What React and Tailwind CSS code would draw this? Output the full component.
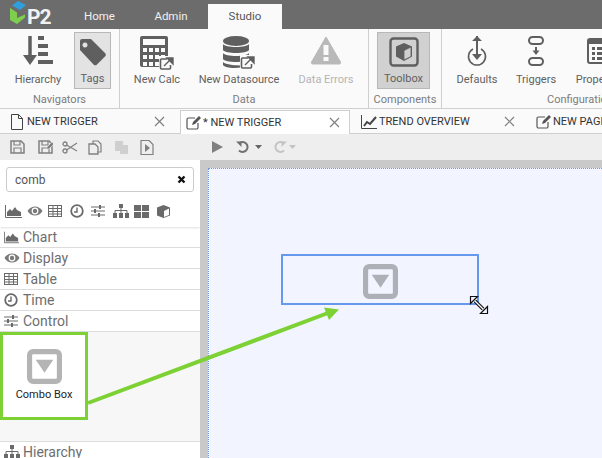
import React from "react";

const Ic = ({ w = 16, h = 16, vb, children, className = "" }) => (
  <svg width={w} height={h} viewBox={vb || `0 0 ${w} ${h}`} className={"shrink-0 " + className}>{children}</svg>
);

const G = "#5f5f5f";

const Ext = ({ x, y }) => (
  <g transform={`translate(${x} ${y})`}>
    <rect x="0" y="0" width="15" height="15" fill="#fafafa" />
    <path d="M8 3H2.500A1 1 0 0 0 1.500 4v8a1 1 0 0 0 1 1h8a1 1 0 0 0 1-1V9" fill="none" stroke={G} strokeWidth="1.600" />
    <path d="M5 10 12 3M8 2h6v6z" fill={G} stroke={G} strokeWidth="1.400" />
  </g>
);

const HierarchyIcon = () => (
  <Ic w={32} h={32}>
    <path d="M8 1v24" stroke={G} strokeWidth="3.500" />
    <path d="M1 20h14l-7 10z" fill={G} />
    <rect x="16" y="1" width="6" height="4" fill={G} /><rect x="16" y="9" width="10" height="4" fill={G} />
    <rect x="16" y="17" width="10" height="4" fill={G} /><rect x="16" y="25" width="15" height="4" fill={G} />
  </Ic>
);
const TagIcon = () => (
  <Ic w={28} h={28} className="mt-[2px]">
    <path fillRule="evenodd" d="M1 3a2 2 0 0 1 2-2h9l14 14a2.500 2.500 0 0 1 0 3.500l-8 8a2.500 2.500 0 0 1-3.500 0L1 12zM6 4.500a2.500 2.500 0 1 0 .01 0z" fill={G} />
  </Ic>
);
const CalcIcon = () => (
  <Ic w={36} h={36} className="mt-[1px]">
    <rect x="1" y="0" width="28" height="31" rx="2" fill={G} />
    <rect x="4" y="3" width="22" height="6" fill="#fafafa" />
    {[4, 11, 18].map((y) => [4, 10, 16, 22].map((x) => <rect key={x + "-" + y} x={x} y={y + 8} width="4" height="4" fill="#fafafa" />))}
    <Ext x={20} y={20} />
  </Ic>
);
const DbIcon = () => (
  <Ic w={34} h={36} className="mt-[1px]">
    <ellipse cx="14" cy="5" rx="13" ry="5" fill={G} />
    <path d="M1 8c2 4 24 4 26 0v6c-2 4-24 4-26 0zM1 17c2 4 24 4 26 0v6c-2 4-24 4-26 0zM1 26c2 3 18 4 20 3v2c-8 2-18 1-20-2z" fill={G} />
    <Ext x={18} y={19} />
  </Ic>
);
const WarnIcon = () => (
  <Ic w={32} h={30}>
    <path d="M16 2 30.500 27a1.500 1.500 0 0 1-1 2h-27a1.500 1.500 0 0 1-1-2z" fill="#b9b9b9" stroke="#b9b9b9" strokeWidth="1" strokeLinejoin="round" />
    <rect x="13.500" y="10" width="5" height="10" fill="#fafafa" /><rect x="13.500" y="22" width="5" height="4" fill="#fafafa" />
  </Ic>
);
const ToolboxIcon = () => (
  <Ic w={30} h={30} className="mt-[1px]">
    <rect x="1.500" y="1.500" width="27" height="27" rx="3" fill="none" stroke={G} strokeWidth="2.400" />
    <path d="M15 6 23 9.500v10L15 24l-8-4.500v-10z" fill={G} />
    <path d="M15 13.500 22 10v9.500L15 23z" fill="#d0d0d0" stroke={G} strokeWidth=".8" />
  </Ic>
);
const DefaultsIcon = () => (
  <Ic w={20} h={32}>
    <path d="M10 1v21" stroke={G} strokeWidth="2" /><path d="M5 6l5-5 5 5zM5 19h10l-5 6z" fill={G} />
    <path d="M6 14a8.500 8.500 0 1 0 8 0" fill="none" stroke={G} strokeWidth="1.600" />
  </Ic>
);
const TriggersIcon = () => (
  <Ic w={18} h={30} className="mt-[1px]">
    <rect x="2" y="1" width="14" height="7" rx="3.500" fill="none" stroke={G} strokeWidth="2" />
    <rect x="2" y="22" width="14" height="7" rx="3.500" fill="none" stroke={G} strokeWidth="2" />
    <path d="M9 11v4" stroke={G} strokeWidth="2" /><path d="M5.500 14.500h7L9 19z" fill={G} />
  </Ic>
);
const PropsIcon = () => (
  <Ic w={28} h={26} className="mt-[3px]">
    <rect x="1" y="1" width="26" height="24" rx="2" fill="none" stroke={G} strokeWidth="2" /><rect x="1" y="1" width="26" height="5" fill={G} />
    {[9, 14, 19].map((y) => <g key={y}><rect x="5" y={y} width="3" height="3" fill={G} /><rect x="10" y={y} width="14" height="3" fill={G} /></g>)}
  </Ic>
);

const RibbonBtn = ({ w, label, muted, children, className = "" }) => (
  <div className={`h-[57px] flex flex-col items-center justify-between pt-[3px] pb-[1px] box-border shrink-0 ${className}`} style={{ width: w }}>
    <div className="h-[36px] flex items-start justify-center">{children}</div>
    <span className={`text-[11px] leading-[16px] whitespace-nowrap ${muted ? "text-[#b4b4b4]" : "text-[#606060]"}`}>{label}</span>
  </div>
);

const Group = ({ label, w, children, labelClass = "justify-center", last }) => (
  <div className={`h-full flex flex-col shrink-0 box-border ${last ? "" : "border-r border-[#cfcfcf]"}`} style={{ width: w }}>
    <div className="flex h-[60px] pt-[3px] items-start box-content">{children}</div>
    <div className={`flex ${labelClass} text-[11px] leading-[16px] text-[#7c7c7c] whitespace-nowrap`}>{label}</div>
  </div>
);

const X = () => (
  <Ic w={11} h={11}><path d="M1 1l9 9M10 1l-9 9" stroke="#808080" strokeWidth="1.200" /></Ic>
);
const PageIc = () => (
  <Ic w={14} h={16}><path d="M1.500 .5h7l4 4v11h-11zM8.500 .5v4h4" fill="none" stroke="#444" strokeWidth="1" /></Ic>
);
const EditIc = () => (
  <Ic w={15} h={15}>
    <path d="M9 3H2.500a1.500 1.500 0 0 0-1.500 1.500v8A1.500 1.500 0 0 0 2.500 14h8a1.500 1.500 0 0 0 1.500-1.500V8" fill="none" stroke="#555" strokeWidth="1.200" />
    <path d="M6 10l1-3 6-6 2 2-6 6z" fill="#555" />
  </Ic>
);
const TrendIc = () => (
  <Ic w={17} h={15}>
    <path d="M.5 1v13.500H16" fill="none" stroke="#444" strokeWidth="1" />
    <path d="M3 12l3-4 3 2 6-7" fill="none" stroke="#444" strokeWidth="2" />
  </Ic>
);

const Tab = ({ w, pl, gap, icon, label, active, xRight, last }) => (
  <div className={`h-full flex items-center shrink-0 box-border relative ${active ? "bg-white border-l border-r border-t border-[#cfcfcf]" : "border-b border-[#cfcfcf] bg-[#fafafa]"}`} style={{ width: w }}>
    <div className="flex items-center flex-1 min-w-0" style={{ paddingLeft: pl, gap }}>
      {icon}
      <span className="text-[11px] leading-[16px] text-[#333] whitespace-nowrap">{label}</span>
    </div>
    {!last && <div className="shrink-0" style={{ marginRight: xRight }}><X /></div>}
  </div>
);

const SaveIc = ({ c = "#808080", pen }) => (
  <Ic w={15} h={14}>
    <path d="M1 1h10l3 3v9H1z" fill="none" stroke={c} strokeWidth="1.500" />
    <path d="M4 1v4h6V1M4 13V8h7v5" fill="none" stroke={c} strokeWidth="1.200" />
    {pen && <path d="M8 9l1-2 5-5 2 2-5 5z" fill={c} stroke="#eee" strokeWidth=".6" />}
  </Ic>
);
const Tool = ({ w, children }) => <div className="flex justify-center items-center shrink-0" style={{ width: w }}>{children}</div>;

const Caret = ({ c = "#666" }) => <Ic w={7} h={4}><path d="M0 0h7L3.500 4z" fill={c} /></Ic>;

const AreaIc = ({ w = 17 }) => (
  <Ic w={w} h={14} vb="0 0 17 14">
    <path d="M.5 1v12.500H17" fill="none" stroke="#6a6a6a" strokeWidth="1" />
    <path d="M2 12V8l3-3 2 2 3-4 2 3 4 2v4z" fill="#6a6a6a" />
  </Ic>
);
const EyeIc = () => (
  <Ic w={16} h={12}>
    <path d="M.5 6C4 0 12 0 15.500 6 12 12 4 12 .5 6z" fill="#7a7a7a" />
    <circle cx="8" cy="6" r="3.400" fill="#fff" /><circle cx="8" cy="6" r="2.200" fill="#7a7a7a" />
  </Ic>
);
const TableIc = () => (
  <Ic w={14} h={12}>
    <rect x=".5" y=".5" width="13" height="11" fill="none" stroke="#6a6a6a" />
    <path d="M1 3.500h12M1 6.500h12M1 9h12M5 1v10M9.500 1v10" stroke="#6a6a6a" strokeWidth="1" fill="none" />
  </Ic>
);
const ClockIc = () => (
  <Ic w={14} h={14}>
    <circle cx="7" cy="7" r="5.800" fill="none" stroke="#6a6a6a" strokeWidth="1.800" />
    <path d="M7 3.500V8H4" fill="none" stroke="#6a6a6a" strokeWidth="1.400" />
  </Ic>
);
const SlidersIc = () => (
  <Ic w={14} h={12}>
    <path d="M0 2h14M0 6h14M0 10h14" stroke="#6a6a6a" strokeWidth="1" />
    <rect x="8" y="0" width="2" height="4" fill="#6a6a6a" /><rect x="3" y="4" width="2" height="4" fill="#6a6a6a" /><rect x="7" y="8" width="2" height="4" fill="#6a6a6a" />
  </Ic>
);
const OrgIc = () => (
  <Ic w={16} h={14}>
    <rect x="6" y="0" width="4" height="4" fill="#6a6a6a" /><rect x="0" y="9" width="4" height="5" fill="#6a6a6a" /><rect x="6" y="9" width="4" height="5" fill="#6a6a6a" /><rect x="12" y="9" width="4" height="5" fill="#6a6a6a" />
    <path d="M8 4v5M2 9V6.500h12V9" fill="none" stroke="#6a6a6a" />
  </Ic>
);
const GridIc = () => (
  <Ic w={15} h={13}>
    <rect x="0" y="0" width="7" height="6" fill="#6a6a6a" /><rect x="8" y="0" width="7" height="6" fill="#6a6a6a" />
    <rect x="0" y="7" width="7" height="6" fill="#6a6a6a" /><rect x="8" y="7" width="7" height="6" fill="#6a6a6a" />
  </Ic>
);
const CubeIc = () => (
  <Ic w={15} h={15}>
    <path d="M7.500 1 14 3.500v8L7.500 14 1 11.500v-8z" fill="#6a6a6a" />
    <path d="M8 7l5-2.500v6.500L8 13z" fill="#fff" />
  </Ic>
);

const Row = ({ icon, label }) => (
  <div className="h-[21px] border-b border-[#dcdcdc] flex items-center pl-[4px] box-border">
    <div className="flex justify-start w-[19px]">{icon}</div>
    <span className="text-[14px] leading-[20px] text-[#6e6e6e]">{label}</span>
  </div>
);

const Cat = ({ children }) => <div className="w-[21.5px] shrink-0 flex items-center">{children}</div>;

const ComboIcon = ({ s, c }) => (
  <svg width={s} height={s} viewBox="0 0 34 34" className="shrink-0">
    <rect x="2.500" y="2.500" width="29" height="29" rx="3.500" fill="none" stroke={c} strokeWidth="5" />
    <path d="M8.500 10.500h17L17 23z" fill={c} />
  </svg>
);

export default function App() {
  return (
    <div className="relative w-[602px] h-[458px] overflow-hidden bg-white" style={{ fontFamily: 'Roboto,"Open Sans",sans-serif' }}>
      {/* Title bar */}
      <div className="h-[29px] bg-[#6c6c6c] flex items-end">
        <div className="w-[71px] h-[29px] shrink-0 relative">
          <svg width="30" height="26" viewBox="0 0 30 26" className="absolute left-0 top-0">
            <path d="M12 5.500 18 1l8 4-6 5z" fill="#2f9fdc" />
            <path d="M10 8l7 4.500V18l8-3.500v3L17 24l-7-4z" fill="#7fcf4e" />
          </svg>
          <span className="absolute left-[27px] top-[8px] text-[21px] leading-[18px] font-bold text-[#f2f2f2] tracking-[-1px]">P2</span>
        </div>
        <div className="w-[57px] h-[25px] flex items-center justify-center text-[11.5px] text-[#f0f0f0] shrink-0">Home</div>
        <div className="w-[80px] h-[25px] pl-[6px] flex items-center justify-center text-[11.5px] text-[#f0f0f0] shrink-0">Admin</div>
        <div className="w-[74px] h-[25px] bg-[#fafafa] flex items-center justify-center text-[11.5px] text-[#555] shrink-0">Studio</div>
      </div>

      {/* Ribbon */}
      <div className="h-[80px] bg-[#fafafa] border-b border-[#cfcfcf] flex box-border overflow-hidden">
        <Group label="Navigators" w={120}>
          <div className="w-[8px] shrink-0" />
          <RibbonBtn w={60} label="Hierarchy"><HierarchyIcon /></RibbonBtn>
          <div className="w-[6px] shrink-0" />
          <RibbonBtn w={37} label="Tags" className="bg-[#e3e3e3] border border-[#b8b8b8]"><TagIcon /></RibbonBtn>
        </Group>
        <Group label="Data" w={249}>
          <div className="w-[7px] shrink-0" />
          <RibbonBtn w={60} label="New Calc"><CalcIcon /></RibbonBtn>
          <div className="w-[5px] shrink-0" />
          <RibbonBtn w={94} label="New Datasource"><DbIcon /></RibbonBtn>
          <RibbonBtn w={80} label="Data Errors" muted><WarnIcon /></RibbonBtn>
        </Group>
        <Group label="Components" w={73}>
          <div className="w-[8px] shrink-0" />
          <RibbonBtn w={53} label="Toolbox" className="bg-[#d1d1d1] border border-[#b8b8b8]"><ToolboxIcon /></RibbonBtn>
        </Group>
        <Group label="Configuration" w={200} labelClass="justify-start pl-[105px]" last>
          <div className="w-[9px] shrink-0" />
          <RibbonBtn w={52} label="Defaults"><DefaultsIcon /></RibbonBtn>
          <div className="w-[7px] shrink-0" />
          <RibbonBtn w={52} label="Triggers"><TriggersIcon /></RibbonBtn>
          <div className="w-[5px] shrink-0" />
          <div className="w-[60px] shrink-0 pl-[8px]">
            <RibbonBtn w={52} label="Properties"><PropsIcon /></RibbonBtn>
          </div>
        </Group>
      </div>

      {/* Tabs */}
      <div className="h-[25px] bg-[#fafafa] flex pt-[1px] box-border overflow-hidden">
        <Tab w={180} pl={10} gap={3} icon={<PageIc />} label="NEW TRIGGER" xRight={15} />
        <Tab w={170} pl={5} gap={2} icon={<EditIc />} label="* NEW TRIGGER" xRight={9} active />
        <Tab w={180} pl={11} gap={1} icon={<TrendIc />} label="TREND OVERVIEW" xRight={15} />
        <Tab w={72} pl={6} gap={2} icon={<EditIc />} label="NEW PAGE" last />
      </div>

      {/* Toolbar */}
      <div className="h-[26px] bg-[#eeeeee] flex items-center pl-[10px]">
        <Tool w={15}><SaveIc /></Tool>
        <div className="w-[12px]" />
        <Tool w={16}><SaveIc pen /></Tool>
        <div className="w-[9px]" />
        <Tool w={16}><Ic w={16} h={13}><circle cx="3" cy="3" r="2" fill="none" stroke="#808080" strokeWidth="1.300" /><circle cx="3" cy="10" r="2" fill="none" stroke="#808080" strokeWidth="1.300" /><path d="M4.500 4 15 10M4.500 9 15 2" stroke="#808080" strokeWidth="1.200" /></Ic></Tool>
        <div className="w-[10px]" />
        <Tool w={16}><Ic w={16} h={15}><path d="M5 4V1h5l3 3v8H9" fill="none" stroke="#808080" strokeWidth="1.200" /><path d="M1 4h6l3 3v7H1z" fill="none" stroke="#808080" strokeWidth="1.300" /></Ic></Tool>
        <div className="w-[10px]" />
        <Tool w={16}><Ic w={16} h={15}><path d="M1 1h8v4h5v9H6V11H1z" fill="#cfcfcf" /></Ic></Tool>
        <div className="w-[10px]" />
        <Tool w={14}><Ic w={14} h={15}><path d="M1 .5h8l4 4v10H1z" fill="none" stroke="#808080" strokeWidth="1.200" /><path d="M5 4l5 4-5 4z" fill="#808080" /></Ic></Tool>
        <div className="w-[56px]" />
        <Tool w={14}><Ic w={13} h={14}><path d="M1 1l11 6-11 6z" fill="#808080" /></Ic></Tool>
        <div className="w-[12px]" />
        <Tool w={14}><Ic w={14} h={14}><path d="M3 3.500a5 5 0 1 1 0 7" fill="none" stroke="#707070" strokeWidth="2" /><path d="M0 1.500h5.500V7z" fill="#707070" /></Ic></Tool>
        <div className="w-[5px]" />
        <Caret />
        <div className="w-[11px]" />
        <Tool w={14}><Ic w={14} h={14}><path d="M11 3.500a5 5 0 1 0 0 7" fill="none" stroke="#c4c4c4" strokeWidth="2" /><path d="M14 1.500H8.500V7z" fill="#c4c4c4" /></Ic></Tool>
        <div className="w-[2px]" />
        <Caret c="#c4c4c4" />
      </div>

      {/* Main */}
      <div className="h-[298px] flex">
        <div className="w-[200px] h-full bg-[#f7f7f7] shrink-0 flex flex-col overflow-hidden">
          <div className="h-[67px] bg-white shrink-0 shadow-[0_1px_2px_rgba(0,0,0,0.12)] relative z-10">
            <div className="pt-[7px] px-[6px]">
              <div className="h-[25px] border border-[#cccccc] rounded-[3px] flex items-center justify-between pl-[8px] pr-[7px] bg-white box-border">
                <span className="text-[12px] text-[#555]">comb</span>
                <Ic w={9} h={9}><path d="M1.500 1.500l6 6M7.500 1.500l-6 6" stroke="#111" strokeWidth="2.400" /></Ic>
              </div>
            </div>
            <div className="flex items-center h-[18px] mt-[10px] pl-[5px]">
              <Cat><AreaIc /></Cat><Cat><EyeIc /></Cat><Cat><TableIc /></Cat><Cat><ClockIc /></Cat>
              <Cat><SlidersIc /></Cat><Cat><OrgIc /></Cat><Cat><GridIc /></Cat><Cat><CubeIc /></Cat>
            </div>
          </div>
          <div className="bg-white shrink-0">
            <Row icon={<AreaIc w={15} />} label="Chart" />
            <Row icon={<EyeIc />} label="Display" />
            <Row icon={<TableIc />} label="Table" />
            <Row icon={<ClockIc />} label="Time" />
            <Row icon={<SlidersIc />} label="Control" />
          </div>
          <div className="h-[110px] shrink-0 border-b border-[#dcdcdc] box-border">
            <div className="w-[88px] h-[88px] border-[3px] border-[#7ed135] bg-white box-border flex flex-col items-center pt-[14px]">
              <ComboIcon s={35} c="#b4b4b4" />
              <span className="text-[11px] leading-[14px] text-[#222] mt-[4px] whitespace-nowrap">Combo Box</span>
            </div>
          </div>
          <div className="bg-white flex-1">
            <Row icon={<OrgIc />} label="Hierarchy" />
          </div>
        </div>
        <div className="flex-1 bg-[#c9c9c9] pl-[8px] pt-[8px]">
          <div className="w-full h-[400px] bg-[#f2f5ff] border-t border-l border-dotted border-[#6f9ae0] box-border pl-[72px] pt-[85px]">
            <div className="w-[198px] h-[51px] border-2 border-[#6699ee] box-border flex items-center justify-center pt-[4px]">
              <ComboIcon s={35} c="#aeb0b8" />
            </div>
          </div>
        </div>
      </div>

      {/* Annotation arrow and cursor overlay */}
      <svg className="absolute left-0 top-0 pointer-events-none" width="602" height="458">
        <path d="M88 403 L328 313" stroke="#7ed135" strokeWidth="4" fill="none" />
        <path d="M339 309.500 L324 307.500 L329 320 Z" fill="#7ed135" />
        <g transform="translate(470 296)">
          <path d="M5 5 L13 13" stroke="#111" strokeWidth="3.500" />
          <path d="M5 5 L13 13" stroke="#fff" strokeWidth="1.200" />
          <path d="M.5 .5H7.500L.5 7.500Z" fill="#f2f5ff" stroke="#111" strokeWidth="1.200" />
          <path d="M17.500 17.500H10.500L17.500 10.500Z" fill="#f2f5ff" stroke="#111" strokeWidth="1.200" />
        </g>
      </svg>
    </div>
  );
}
